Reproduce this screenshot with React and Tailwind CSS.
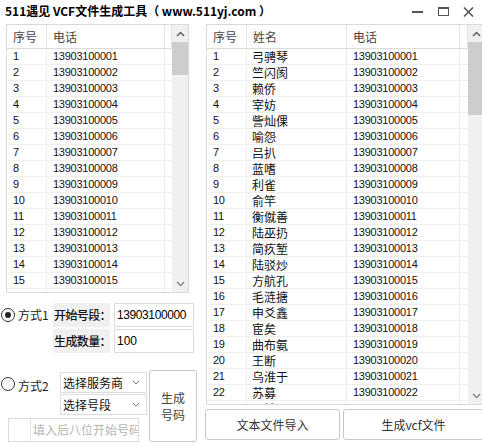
import React from "react";

const names = [
  "弓骋琴", "竺闪阂", "赖侨", "宰妨", "訾灿倮", "喻怨", "吕扒", "蓝嗜", "利雀", "俞竿",
  "衡僦善", "陆巫扔", "简疚堑", "陆驳炒", "方航孔", "毛涟搪", "申爻鑫", "宦矣", "曲布氨", "王断",
  "乌淮于", "苏募", "吴婧",
];

const phone = (i) => "139031000" + String(i).padStart(2, "0");

function Up() {
  return (
    <svg width="9" height="6" viewBox="0 0 9 6">
      <polyline points="1,5 4.5,1.5 8,5" fill="none" stroke="#606060" strokeWidth="1.5" />
    </svg>
  );
}
function Down() {
  return (
    <svg width="9" height="6" viewBox="0 0 9 6">
      <polyline points="1,1 4.5,4.5 8,1" fill="none" stroke="#8a8a8a" strokeWidth="1.5" />
    </svg>
  );
}

function Scrollbar({ thumbTop, thumbH }) {
  return (
    <div className="w-[16px] shrink-0 bg-[#f0f0f0] flex flex-col h-full">
      <div className="h-[17px] flex items-center justify-center shrink-0">
        <Up />
      </div>
      <div className="shrink-0" style={{ height: thumbTop }} />
      <div className="bg-[#cdcdcd] shrink-0" style={{ height: thumbH }} />
      <div className="flex-1" />
      <div className="h-[17px] flex items-center justify-center shrink-0">
        <Down />
      </div>
    </div>
  );
}

function LeftTable() {
  const rows = Array.from({ length: 16 }, (_, i) => i + 1);
  return (
    <div className="ml-[6px] w-[183px] h-[269px] border border-[#d9d9d9] flex overflow-hidden">
      <div className="w-[165px] flex flex-col overflow-hidden">
        <div className="h-[24px] shrink-0 flex border-b border-[#dcdcdc] text-[12px] text-[#444]">
          <div className="w-[40px] border-r border-[#e3e3e3] flex items-center pl-[6px]">序号</div>
          <div className="w-[118px] border-r border-[#e3e3e3] flex items-center pl-[6px]">电话</div>
          <div className="w-[7px] border-r border-[#e3e3e3]" />
        </div>
        {rows.map((r) => (
          <div key={r} className="h-[16px] shrink-0 flex border-b border-[#efefef] text-[11px] tracking-[-0.25px] font-['Liberation_Sans',sans-serif] text-[#111]">
            <div className="w-[40px] border-r border-[#ececec] flex items-center pl-[6px]">{r}</div>
            <div className="w-[118px] border-r border-[#ececec] flex items-center pl-[6px]">{phone(r)}</div>
            <div className="w-[7px]" />
          </div>
        ))}
      </div>
      <Scrollbar thumbTop={0} thumbH={33} />
    </div>
  );
}

function RightTable() {
  return (
    <div className="ml-[1px] w-[279px] h-[381px] border border-[#d9d9d9] flex overflow-hidden">
      <div className="w-[261px] flex flex-col overflow-hidden">
        <div className="h-[24px] shrink-0 flex border-b border-[#dcdcdc] text-[12px] text-[#444]">
          <div className="w-[40px] border-r border-[#e3e3e3] flex items-center pl-[6px]">序号</div>
          <div className="w-[100px] border-r border-[#e3e3e3] flex items-center pl-[6px]">姓名</div>
          <div className="w-[113px] border-r border-[#e3e3e3] flex items-center pl-[6px]">电话</div>
          <div className="w-[8px] border-r border-[#e3e3e3]" />
        </div>
        {names.map((n, i) => (
          <div key={i} className="h-[16px] shrink-0 flex border-b border-[#efefef] text-[#111]">
            <div className="w-[40px] border-r border-[#ececec] flex items-center pl-[6px] text-[11px] tracking-[-0.25px] font-['Liberation_Sans',sans-serif]">{i + 1}</div>
            <div className="w-[100px] border-r border-[#ececec] flex items-center pl-[5px] text-[12px]">{n}</div>
            <div className="w-[113px] border-r border-[#ececec] flex items-center pl-[6px] text-[11px] tracking-[-0.25px] font-['Liberation_Sans',sans-serif]">{phone(i + 1)}</div>
            <div className="w-[8px]" />
          </div>
        ))}
      </div>
      <Scrollbar thumbTop={0} thumbH={73} />
    </div>
  );
}

function Radio({ checked }) {
  return (
    <div className="w-[14px] h-[14px] rounded-full border border-[#333] bg-white flex items-center justify-center shrink-0">
      {checked && <div className="w-[6px] h-[6px] rounded-full bg-[#222]" />}
    </div>
  );
}

function Select({ label }) {
  return (
    <div className="w-[87px] h-[21px] border border-[#dcdcdc] flex items-center justify-between pl-[2px] pr-[6px] text-[12px] text-[#111]">
      <span className="whitespace-nowrap">{label}</span>
      <svg width="8" height="5" viewBox="0 0 8 5">
        <polyline points="1,1 4,4 7,1" fill="none" stroke="#777" strokeWidth="1" />
      </svg>
    </div>
  );
}

export default function App() {
  return (
    <div className="w-[482px] h-[446px] bg-white overflow-hidden font-['Noto_Sans_CJK_SC',sans-serif] text-black">
      <div className="h-[24px] flex items-center justify-between pl-[5px] pb-[3px]">
        <div className="text-[12px] font-bold whitespace-nowrap leading-none">
          511遇见 VCF文件生成工具（ www.511yj.com ）
        </div>
        <div className="flex items-center h-full pt-[2px]">
          <div className="w-[11px] h-[2px] bg-[#555] mr-[15px]" />
          <div className="w-[11px] h-[9px] border border-[#555] border-t-[2px] mr-[14px]" />
          <svg width="11" height="10" viewBox="0 0 11 10" className="mr-[8px]">
            <path d="M1 0.5 L10 9.5 M10 0.5 L1 9.5" stroke="#555" strokeWidth="1.6" />
          </svg>
        </div>
      </div>
      <div className="flex">
        <div className="w-[205px] shrink-0 flex flex-col">
          <LeftTable />
          <div className="mt-[10px] flex">
            <div className="w-[53px] flex items-center pl-[1px] h-[24px]">
              <Radio checked />
              <span className="ml-[3px] text-[12px] text-[#222] whitespace-nowrap">方式1</span>
            </div>
            <div className="flex flex-col gap-[2px]">
              <div className="flex">
                <div className="w-[57px] h-[24px] bg-[#f0f0f0] flex items-center pl-[1px] text-[12px] font-medium text-[#111] whitespace-nowrap tracking-[-0.6px]">开始号段：</div>
                <div className="ml-[4px] w-[80px] h-[24px] border border-[#dcdcdc] flex items-center pl-[2px] text-[12px] font-['Liberation_Sans',sans-serif] tracking-[-0.4px] whitespace-nowrap overflow-hidden">13903100000</div>
              </div>
              <div className="flex">
                <div className="w-[57px] h-[24px] bg-[#f0f0f0] flex items-center pl-[1px] text-[12px] font-medium text-[#111] whitespace-nowrap tracking-[-0.6px]">生成数量：</div>
                <div className="ml-[4px] w-[80px] h-[24px] border border-[#dcdcdc] flex items-center pl-[2px] text-[12px] font-['Liberation_Sans',sans-serif]">100</div>
              </div>
            </div>
          </div>
          <div className="mt-[17px] flex">
            <div className="w-[149px] flex flex-col">
              <div className="flex h-[46px]">
                <div className="w-[60px] flex items-start pl-[1px] pt-[7px]">
                  <Radio />
                  <span className="ml-[3px] text-[12px] text-[#222] whitespace-nowrap">方式2</span>
                </div>
                <div className="flex flex-col pt-[2px] gap-[1px]">
                  <Select label="选择服务商" />
                  <Select label="选择号段" />
                </div>
              </div>
              <div className="ml-[8px] mt-[2px] w-[131px] h-[24px] border border-[#dcdcdc] flex overflow-hidden">
                <div className="w-[22px] shrink-0 border-r border-[#e3e3e3]" />
                <div className="pl-[2px] text-[12px] text-[#b5b5b5] whitespace-nowrap flex items-center">填入后八位开始号码</div>
              </div>
            </div>
            <div className="w-[48px] h-[72px] border border-[#c8c8c8] rounded-[3px] flex flex-col items-center justify-center text-[12px] text-[#444] leading-[17px]">
              <span>生成</span>
              <span>号码</span>
            </div>
          </div>
        </div>
        <div className="flex flex-col">
          <RightTable />
          <div className="mt-[4px] flex gap-[3px]">
            <div className="w-[135px] h-[31px] border border-[#c8c8c8] rounded-[3px] flex items-center justify-center text-[12px] text-[#333]">文本文件导入</div>
            <div className="w-[141px] h-[31px] border border-[#c8c8c8] rounded-[3px] flex items-center justify-center text-[12px] text-[#333]">生成vcf文件</div>
          </div>
        </div>
      </div>
    </div>
  );
}
